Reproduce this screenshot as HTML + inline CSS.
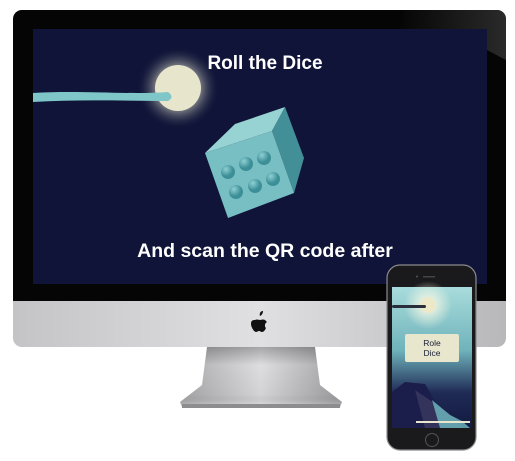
<!DOCTYPE html>
<html><head><style>
html,body{margin:0;padding:0;background:#fff;width:515px;height:461px;overflow:hidden;position:relative;font-family:"Liberation Sans",sans-serif}
.a{position:absolute}
</style></head><body>
<svg class="a" style="left:0;top:0" width="515" height="461">
<defs>
<linearGradient id="st" x1="0" x2="1"><stop offset="0" stop-color="#a9a9ab"/><stop offset=".5" stop-color="#dedee0"/><stop offset="1" stop-color="#9f9fa2"/></linearGradient>
<linearGradient id="sv" x1="0" y1="0" x2="0" y2="1"><stop offset="0" stop-color="#000" stop-opacity=".25"/><stop offset=".3" stop-color="#000" stop-opacity="0"/><stop offset=".8" stop-color="#000" stop-opacity=".05"/><stop offset="1" stop-color="#fff" stop-opacity=".3"/></linearGradient>
<linearGradient id="chin" x1="0" x2="1"><stop offset="0" stop-color="#c4c4c7"/><stop offset=".5" stop-color="#e0e0e3"/><stop offset="1" stop-color="#b8b8bb"/></linearGradient>
<linearGradient id="refl" x1="0" y1="0" x2="1" y2="0"><stop offset="0" stop-color="#333" stop-opacity="0"/><stop offset="1" stop-color="#333" stop-opacity=".8"/></linearGradient>
<radialGradient id="glow"><stop offset=".5" stop-color="#e8e8d0" stop-opacity=".55"/><stop offset="1" stop-color="#0f1438" stop-opacity="0"/></radialGradient>
<radialGradient id="pip" cx=".35" cy=".3"><stop offset="0" stop-color="#8fd0d3"/><stop offset="1" stop-color="#3d8f97"/></radialGradient>
<linearGradient id="ph" x1="0" y1="0" x2="0" y2="1"><stop offset="0" stop-color="#a9dcdc"/><stop offset=".45" stop-color="#6fb3bb"/><stop offset=".75" stop-color="#1f2a55"/><stop offset="1" stop-color="#121a40"/></linearGradient>
<radialGradient id="pg"><stop offset="0" stop-color="#fffbe6"/><stop offset="1" stop-color="#fffbe6" stop-opacity="0"/></radialGradient>
</defs>
<path d="M207 347 L315 347 L320 385 L342 402 L340 407 L182 407 L180 402 L202 385 Z" fill="url(#st)"/>
<path d="M207 347 L315 347 L320 385 L342 402 L340 407 L182 407 L180 402 L202 385 Z" fill="url(#sv)"/>
<rect x="182" y="404" width="158" height="4" fill="#8d8d90"/>
<rect x="13" y="10" width="493" height="337" rx="9" fill="url(#chin)"/>
<path d="M13 19 a9 9 0 0 1 9 -9 h475 a9 9 0 0 1 9 9 V301 H13 Z" fill="#050505"/>
<path d="M405 10 L497 10 a9 9 0 0 1 9 9 V60 L487 50 L487 29 L398 29 Z" fill="url(#refl)"/>
<rect x="33" y="29" width="454" height="255" fill="#0f1438"/>
<circle cx="178" cy="88" r="42" fill="url(#glow)"/>
<circle cx="178" cy="88" r="23" fill="#e7e6cc"/>
<path d="M33 93 C80 90 130 95 168 92 Q175 97 168 101 C130 101 80 99 33 102 Z" fill="#7fc6c8"/>
<text x="265" y="69" fill="#fff" font-size="19" font-weight="bold" text-anchor="middle">Roll the Dice</text>
<text x="265" y="257" fill="#fff" font-size="19.5" font-weight="bold" text-anchor="middle">And scan the QR code after</text>
<polygon points="205,153 235,124 285,107 272,131" fill="#98d3d4"/>
<polygon points="272,131 285,107 304,158 294,193" fill="#438f98"/>
<polygon points="205,153 272,131 294,193 228,218" fill="#77bfc2"/>
<g fill="url(#pip)"><circle cx="228" cy="172" r="7"/><circle cx="246" cy="164" r="7"/><circle cx="264" cy="158" r="7"/><circle cx="236" cy="192" r="7"/><circle cx="255" cy="186" r="7"/><circle cx="273" cy="179" r="7"/></g>
<path d="M260 316 c2-1 3-3 3-5 c-2 0-4 2-3 5 Z M255 320 c2-1 4 0 5 0 c1 0 3-1 5 0 c1 1 2 2 2 2 c-2 1-3 4-1 6 c-1 2-2 4-4 4 c-1 0-2-1-3-1 c-1 0-2 1-3 1 c-2 0-5-5-5-8 c0-3 1-4 4-4 Z" fill="#111"/>
<rect x="387" y="265" width="89" height="185" rx="13" fill="#1a1a1c" stroke="#8b8b8e" stroke-width="1.2"/>
<rect x="392" y="287" width="80" height="141" fill="url(#ph)"/>
<circle cx="428" cy="305" r="24" fill="url(#pg)"/>
<circle cx="428" cy="305" r="8" fill="#ece8c8"/>
<rect x="392" y="305" width="34" height="3" rx="1.5" fill="#2a2d3c"/>
<rect x="405" y="334" width="54" height="28" rx="2" fill="#e8e6cc"/>
<text x="432" y="346" font-size="8.5" fill="#1a1f3a" text-anchor="middle">Role</text>
<text x="432" y="356" font-size="8.5" fill="#1a1f3a" text-anchor="middle">Dice</text>
<path d="M392 392 L405 382 L425 384 L437 405 L450 415 L462 421 L462 428 L392 428 Z" fill="#1b1d4a"/>
<path d="M415 390 L437 405 L455 418 L462 428 L425 428 Z" fill="#3b3960" opacity=".8"/>
<path d="M432 400 L450 415 L462 421 L470 428 L440 428 Z" fill="#6fb9c0" opacity=".8"/>
<rect x="416" y="421" width="54" height="2" fill="#e8e6cc"/>
<rect x="423" y="276" width="12" height="1.5" fill="#444"/>
<circle cx="417" cy="276.5" r="1" fill="#555"/>
<circle cx="432" cy="440" r="6.5" fill="none" stroke="#555" stroke-width="1"/>
</svg>
</body></html>
